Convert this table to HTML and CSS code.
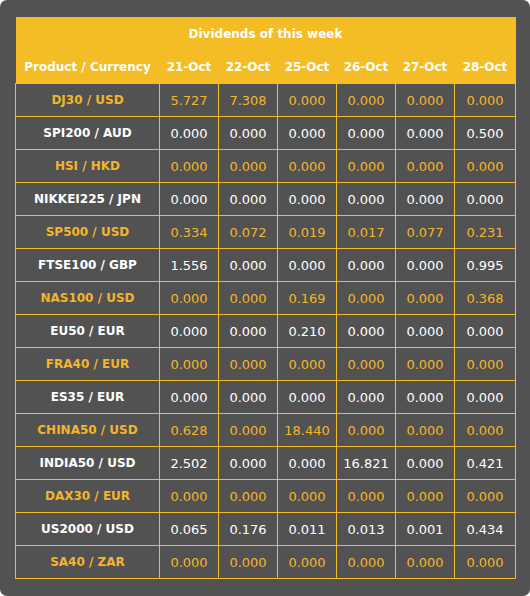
FILE: index.html
```html
<!DOCTYPE html>
<html>
<head>
<meta charset="utf-8">
<link rel="stylesheet" href="styles.css">
</head>
<body>
<div class="panel">
<table class="div-table">
<colgroup><col class="c-prod"><col class="c-day"><col class="c-day"><col class="c-day"><col class="c-day"><col class="c-day"><col class="c-last"></colgroup>
<thead>
<tr><th class="title" colspan="7">Dividends of this week</th></tr>
<tr class="cols"><th>Product / Currency</th><th>21-Oct</th><th>22-Oct</th><th>25-Oct</th><th>26-Oct</th><th>27-Oct</th><th>28-Oct</th></tr>
</thead>
<tbody>
<tr class="odd"><td class="lbl">DJ30 / USD</td><td>5.727</td><td>7.308</td><td>0.000</td><td>0.000</td><td>0.000</td><td>0.000</td></tr>
<tr class="even"><td class="lbl">SPI200 / AUD</td><td>0.000</td><td>0.000</td><td>0.000</td><td>0.000</td><td>0.000</td><td>0.500</td></tr>
<tr class="odd"><td class="lbl">HSI / HKD</td><td>0.000</td><td>0.000</td><td>0.000</td><td>0.000</td><td>0.000</td><td>0.000</td></tr>
<tr class="even"><td class="lbl">NIKKEI225 / JPN</td><td>0.000</td><td>0.000</td><td>0.000</td><td>0.000</td><td>0.000</td><td>0.000</td></tr>
<tr class="odd"><td class="lbl">SP500 / USD</td><td>0.334</td><td>0.072</td><td>0.019</td><td>0.017</td><td>0.077</td><td>0.231</td></tr>
<tr class="even"><td class="lbl">FTSE100 / GBP</td><td>1.556</td><td>0.000</td><td>0.000</td><td>0.000</td><td>0.000</td><td>0.995</td></tr>
<tr class="odd"><td class="lbl">NAS100 / USD</td><td>0.000</td><td>0.000</td><td>0.169</td><td>0.000</td><td>0.000</td><td>0.368</td></tr>
<tr class="even"><td class="lbl">EU50 / EUR</td><td>0.000</td><td>0.000</td><td>0.210</td><td>0.000</td><td>0.000</td><td>0.000</td></tr>
<tr class="odd"><td class="lbl">FRA40 / EUR</td><td>0.000</td><td>0.000</td><td>0.000</td><td>0.000</td><td>0.000</td><td>0.000</td></tr>
<tr class="even"><td class="lbl">ES35 / EUR</td><td>0.000</td><td>0.000</td><td>0.000</td><td>0.000</td><td>0.000</td><td>0.000</td></tr>
<tr class="odd"><td class="lbl">CHINA50 / USD</td><td>0.628</td><td>0.000</td><td>18.440</td><td>0.000</td><td>0.000</td><td>0.000</td></tr>
<tr class="even"><td class="lbl">INDIA50 / USD</td><td>2.502</td><td>0.000</td><td>0.000</td><td>16.821</td><td>0.000</td><td>0.421</td></tr>
<tr class="odd"><td class="lbl">DAX30 / EUR</td><td>0.000</td><td>0.000</td><td>0.000</td><td>0.000</td><td>0.000</td><td>0.000</td></tr>
<tr class="even"><td class="lbl">US2000 / USD</td><td>0.065</td><td>0.176</td><td>0.011</td><td>0.013</td><td>0.001</td><td>0.434</td></tr>
<tr class="odd"><td class="lbl">SA40 / ZAR</td><td>0.000</td><td>0.000</td><td>0.000</td><td>0.000</td><td>0.000</td><td>0.000</td></tr>
</tbody>
</table>
</div>
</body>
</html>
```
FILE: styles.css
```css
html, body {
  margin: 0;
  padding: 0;
  background: #ffffff;
}
.panel {
  width: 530px;
  height: 596px;
  box-sizing: border-box;
  background: #525252;
  border-radius: 7px;
  padding: 17px 15px 0 15px;
  font-family: "DejaVu Sans", sans-serif;
}
.div-table {
  width: 500px;
  border-collapse: collapse;
  table-layout: fixed;
  font-size: 13px;
}
.c-prod { width: 144px; }
.c-day { width: 59px; }
.c-last { width: 61px; }
.div-table th {
  background: #f4bd25;
  color: #ffffff;
  font-weight: bold;
  font-size: 12px;
  height: 33px;
  padding: 0;
  text-align: center;
  white-space: nowrap;
}
.div-table td {
  height: 32px;
  padding: 0;
  text-align: center;
  border: 1px solid #f4bd25;
  white-space: nowrap;
}
.div-table td.lbl {
  font-weight: bold;
  font-size: 12px;
}
.odd td {
  color: #f4b52a;
}
.even td {
  color: #ffffff;
}
```
